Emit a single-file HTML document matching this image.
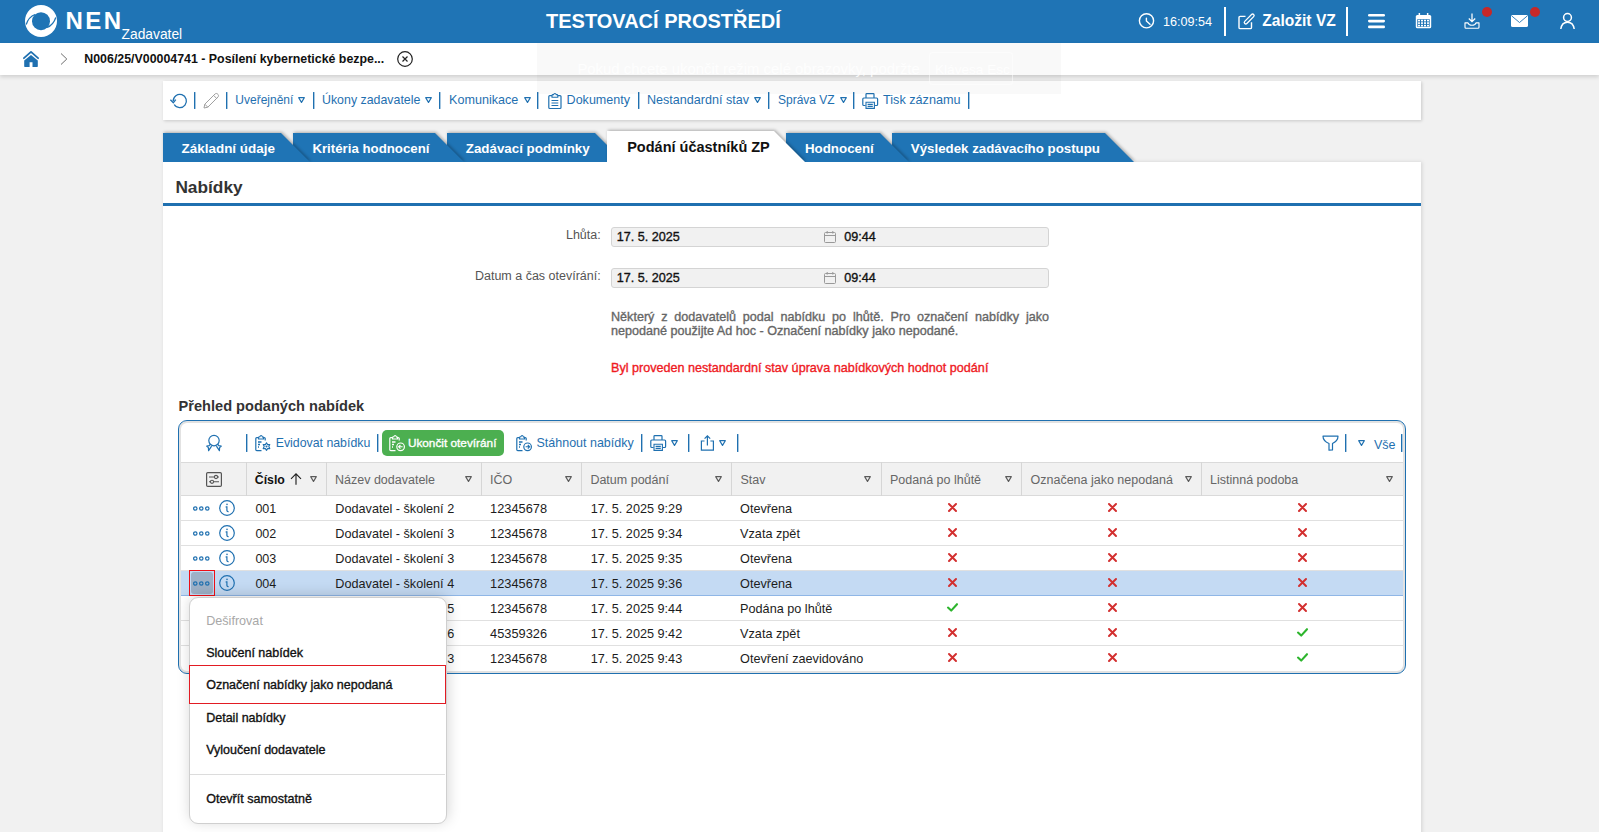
<!DOCTYPE html><html><head><meta charset="utf-8"><style>
html,body{margin:0;padding:0;}
body{width:1599px;height:832px;overflow:hidden;position:relative;background:#f1f1f1;font-family:"Liberation Sans", sans-serif;}
.t{position:absolute;white-space:nowrap;font-family:"Liberation Sans", sans-serif;}
.med{-webkit-text-stroke:0.35px currentColor;}
svg{overflow:visible}

</style></head><body>
<div style="position:absolute;left:163px;top:162px;width:1258px;height:700px;background:#fff;box-shadow:1px 0 4px rgba(0,0,0,0.13);"></div>
<div style="position:absolute;left:163px;top:81px;width:1258px;height:39px;background:#fff;box-shadow:1px 1px 3px rgba(0,0,0,0.17);"></div>
<div style="position:absolute;left:0px;top:0px;width:1599px;height:43px;background:#1f74b5;"></div>
<svg style="position:absolute;left:25px;top:5px;" width="32" height="32" viewBox="0 0 32 32"><circle cx="16" cy="16" r="16" fill="#fff"/>
<circle cx="16" cy="16.2" r="9" fill="#1f74b5"/>
<path d="M1.2 19.5 C3 14 6 11 10 9.5" stroke="#1f74b5" stroke-width="1.25" fill="none"/>
<path d="M30.8 12.5 C29 18 26 21 22 22.5" stroke="#1f74b5" stroke-width="1.25" fill="none"/></svg>
<div class="t " style="left:65.5px;top:9.08px;font-size:24px;line-height:24px;font-weight:bold;color:#fff;letter-spacing:2.4px;">NEN</div>
<div class="t " style="left:121.6px;top:27.72px;font-size:13.8px;line-height:13.8px;font-weight:normal;color:#fff;">Zadavatel</div>
<div class="t " style="left:546px;top:10.97px;font-size:20px;line-height:20px;font-weight:bold;color:#fff;">TESTOVACÍ PROSTŘEDÍ</div>
<svg style="position:absolute;left:1138px;top:13px;" width="17" height="16" viewBox="0 0 17 16"><circle cx="8.5" cy="7.8" r="7.1" stroke="#fff" stroke-width="1.4" fill="none"/><path d="M8.4 5.2 V8.1 L12 11.3" stroke="#fff" stroke-width="1.4" fill="none" stroke-linecap="round" stroke-linejoin="round"/></svg>
<div class="t " style="left:1163px;top:16.03px;font-size:12.6px;line-height:12.6px;font-weight:normal;color:#fff;">16:09:54</div>
<div style="position:absolute;left:1224px;top:7px;width:2px;height:29px;background:#fff;"></div>
<svg style="position:absolute;left:1238px;top:13px;" width="17" height="16" viewBox="0 0 17 16"><path d="M7.5 3.4 H2.2 Q1 3.4 1 4.6 V14.4 Q1 15.6 2.2 15.6 H12.3 Q13.5 15.6 13.5 14.4 V9.3" stroke="#fff" stroke-width="1.4" fill="none"/><path d="M7.8 9.4 L14.6 2.6" stroke="#fff" stroke-width="4.3" stroke-linecap="round"/><path d="M7.8 9.4 L14.6 2.6" stroke="#1f74b5" stroke-width="1.7" stroke-linecap="round"/></svg>
<div class="t " style="left:1262.2px;top:12.79px;font-size:15.6px;line-height:15.6px;font-weight:bold;color:#fff;">Založit VZ</div>
<div style="position:absolute;left:1346px;top:7px;width:2px;height:29px;background:#fff;"></div>
<svg style="position:absolute;left:1368px;top:13px;" width="17" height="16" viewBox="0 0 17 16"><rect x="0" y="1" width="17" height="2.6" rx="1.3" fill="#fff"/><rect x="0" y="6.8" width="17" height="2.6" rx="1.3" fill="#fff"/><rect x="0" y="12.6" width="17" height="2.6" rx="1.3" fill="#fff"/></svg>
<svg style="position:absolute;left:1415px;top:13px;" width="17" height="16" viewBox="0 0 17 16"><rect x="0.8" y="2" width="15.4" height="13.2" rx="1.5" fill="#fff"/>
<rect x="2.3" y="6.2" width="12.4" height="7.6" fill="#1f74b5"/>
<g fill="#fff"><rect x="3" y="6.8" width="2" height="1.6"/><rect x="6" y="6.8" width="2" height="1.6"/><rect x="9" y="6.8" width="2" height="1.6"/><rect x="12" y="6.8" width="2" height="1.6"/>
<rect x="3" y="9.3" width="2" height="1.6"/><rect x="6" y="9.3" width="2" height="1.6"/><rect x="9" y="9.3" width="2" height="1.6"/><rect x="12" y="9.3" width="2" height="1.6"/>
<rect x="3" y="11.8" width="2" height="1.6"/><rect x="6" y="11.8" width="2" height="1.6"/><rect x="9" y="11.8" width="2" height="1.6"/><rect x="12" y="11.8" width="2" height="1.6"/></g>
<rect x="3.6" y="0" width="1.5" height="3.5" fill="#fff"/><rect x="11.9" y="0" width="1.5" height="3.5" fill="#fff"/></svg>
<svg style="position:absolute;left:1464px;top:13px;" width="16" height="16" viewBox="0 0 16 16"><path d="M8 0.5 V8.5 M4.8 5.5 L8 8.7 L11.2 5.5" stroke="#fff" stroke-width="1.25" fill="none"/><path d="M1 9.8 V14.2 Q1 15.2 2 15.2 H14 Q15 15.2 15 14.2 V9.8 H12 C11.5 11.6 10 12.2 8 12.2 C6 12.2 4.5 11.6 4 9.8 Z" stroke="#fff" stroke-width="1.15" fill="none" stroke-linejoin="round"/></svg>
<svg style="position:absolute;left:1482px;top:7px;" width="10" height="10" viewBox="0 0 10 10"><circle cx="5" cy="5" r="5" fill="#c62828"/></svg>
<svg style="position:absolute;left:1511px;top:15px;" width="17" height="12" viewBox="0 0 17 12"><rect x="0" y="0" width="17" height="12" rx="1.6" fill="#fff"/><path d="M0.8 1 L8.5 7.5 L16.2 1" stroke="#1f74b5" stroke-width="0.9" fill="none"/></svg>
<svg style="position:absolute;left:1530px;top:7px;" width="10" height="10" viewBox="0 0 10 10"><circle cx="5" cy="5" r="5" fill="#c62828"/></svg>
<svg style="position:absolute;left:1560px;top:13px;" width="16" height="16" viewBox="0 0 16 16"><circle cx="7.5" cy="4.5" r="3.9" stroke="#fff" stroke-width="1.5" fill="none"/><path d="M0.8 16 C1.5 11 4 9.2 7.5 9.2 C11 9.2 13.5 11 14.2 16" stroke="#fff" stroke-width="1.5" fill="none"/></svg>
<div style="position:absolute;left:0px;top:43px;width:1599px;height:32px;background:#fff;box-shadow:0 2px 4px rgba(0,0,0,0.14);"></div>
<svg style="position:absolute;left:23px;top:51px;" width="16" height="16" viewBox="0 0 16 16"><path d="M0.9 7.2 L8 0.9 L15.1 7.2" stroke="#1f70b0" stroke-width="1.8" fill="none" stroke-linecap="round" stroke-linejoin="round"/><path d="M1.2 9.4 L8 3.9 L14.8 9.4 V15.3 Q14.8 15.9 14.2 15.9 H9.5 V11.3 H6.6 V15.9 H1.8 Q1.2 15.9 1.2 15.3 Z" fill="#1f70b0"/></svg>
<svg style="position:absolute;left:60px;top:53px;" width="8" height="12" viewBox="0 0 8 12"><path d="M1 0.5 L6.8 6 L1 11.5" stroke="#666" stroke-width="0.95" fill="none"/></svg>
<div class="t " style="left:84.3px;top:53.22px;font-size:12.38px;line-height:12.38px;font-weight:bold;color:#111;">N006/25/V00004741 - Posílení kybernetické bezpe...</div>
<svg style="position:absolute;left:397px;top:51px;" width="16" height="16" viewBox="0 0 16 16"><circle cx="8" cy="8" r="7.3" stroke="#222" stroke-width="1.2" fill="none"/><path d="M5.5 5.5 L10.5 10.5 M10.5 5.5 L5.5 10.5" stroke="#222" stroke-width="1.2"/></svg>
<svg style="position:absolute;left:171.2px;top:95.2px;" width="16" height="15" viewBox="0 0 16 15"><path d="M3.2 9.5 A6.6 6.6 0 1 0 2.2 6.2" stroke="#1f70b0" stroke-width="1.3" fill="none"/><path d="M-0.6 4.8 L2.3 7.8 L4.8 4.6" stroke="#1f70b0" stroke-width="1.3" fill="none"/></svg>
<svg style="position:absolute;left:193.8px;top:92px;" width="1.4" height="17" viewBox="0 0 1.4 17"><rect x="0" y="0" width="1.4" height="17" fill="#1f70b0"/></svg>
<svg style="position:absolute;left:203px;top:93px;" width="16" height="16" viewBox="0 0 16 16"><path d="M1 15 L1.8 11.2 L12 1 C12.8 0.3 13.8 0.3 14.6 1 L15 1.4 C15.7 2.2 15.7 3.2 15 4 L4.8 14.2 Z M10.6 2.4 L13.6 5.4 M1.8 11.2 L4.8 14.2" stroke="#a0a0a0" stroke-width="1" fill="none" stroke-linejoin="round"/></svg>
<svg style="position:absolute;left:225.8px;top:92px;" width="1.4" height="17" viewBox="0 0 1.4 17"><rect x="0" y="0" width="1.4" height="17" fill="#1f70b0"/></svg>
<div class="t " style="left:235.3px;top:94.24px;font-size:12.0px;line-height:12.0px;font-weight:normal;color:#1f70b0;">Uveřejnění</div>
<svg style="position:absolute;left:298.3px;top:97px;" width="7" height="6" viewBox="0 0 7 6"><path d="M0.7 0.7 H6.3 L3.5 5.4 Z" stroke="#1f70b0" stroke-width="1.2" fill="none" stroke-linejoin="round"/></svg>
<svg style="position:absolute;left:312.90000000000003px;top:92px;" width="1.4" height="17" viewBox="0 0 1.4 17"><rect x="0" y="0" width="1.4" height="17" fill="#1f70b0"/></svg>
<div class="t " style="left:322px;top:93.92px;font-size:12.38px;line-height:12.38px;font-weight:normal;color:#1f70b0;">Úkony zadavatele</div>
<svg style="position:absolute;left:425.3px;top:97px;" width="7" height="6" viewBox="0 0 7 6"><path d="M0.7 0.7 H6.3 L3.5 5.4 Z" stroke="#1f70b0" stroke-width="1.2" fill="none" stroke-linejoin="round"/></svg>
<svg style="position:absolute;left:438.8px;top:92px;" width="1.4" height="17" viewBox="0 0 1.4 17"><rect x="0" y="0" width="1.4" height="17" fill="#1f70b0"/></svg>
<div class="t " style="left:449px;top:93.73px;font-size:12.6px;line-height:12.6px;font-weight:normal;color:#1f70b0;">Komunikace</div>
<svg style="position:absolute;left:523.7px;top:97px;" width="7" height="6" viewBox="0 0 7 6"><path d="M0.7 0.7 H6.3 L3.5 5.4 Z" stroke="#1f70b0" stroke-width="1.2" fill="none" stroke-linejoin="round"/></svg>
<svg style="position:absolute;left:536.5999999999999px;top:92px;" width="1.4" height="17" viewBox="0 0 1.4 17"><rect x="0" y="0" width="1.4" height="17" fill="#1f70b0"/></svg>
<svg style="position:absolute;left:548px;top:93px;" width="14" height="16" viewBox="0 0 14 16"><path d="M4 2.6 H1.8 C1.2 2.6 0.8 3 0.8 3.6 V14.6 C0.8 15.2 1.2 15.5 1.8 15.5 H12 C12.6 15.5 13 15.2 13 14.6 V3.6 C13 3 12.6 2.6 12 2.6 H10" stroke="#1f70b0" stroke-width="1.2" fill="none"/><path d="M4 4.2 V2.4 C4 1.8 4.4 1.6 5 1.6 H5.6 C5.8 0.8 6.2 0.5 6.9 0.5 C7.6 0.5 8 0.8 8.2 1.6 H8.8 C9.4 1.6 9.8 1.8 9.8 2.4 V4.2 Z" stroke="#1f70b0" stroke-width="1.1" fill="none"/><path d="M3.5 7.5 H10.3 M3.5 10 H10.3 M3.5 12.5 H10.3" stroke="#1f70b0" stroke-width="1.1"/></svg>
<div class="t " style="left:566.6px;top:93.78px;font-size:12.54px;line-height:12.54px;font-weight:normal;color:#1f70b0;">Dokumenty</div>
<svg style="position:absolute;left:637.6999999999999px;top:92px;" width="1.4" height="17" viewBox="0 0 1.4 17"><rect x="0" y="0" width="1.4" height="17" fill="#1f70b0"/></svg>
<div class="t " style="left:647px;top:93.76px;font-size:12.57px;line-height:12.57px;font-weight:normal;color:#1f70b0;">Nestandardní stav</div>
<svg style="position:absolute;left:754.3px;top:97px;" width="7" height="6" viewBox="0 0 7 6"><path d="M0.7 0.7 H6.3 L3.5 5.4 Z" stroke="#1f70b0" stroke-width="1.2" fill="none" stroke-linejoin="round"/></svg>
<svg style="position:absolute;left:767.5999999999999px;top:92px;" width="1.4" height="17" viewBox="0 0 1.4 17"><rect x="0" y="0" width="1.4" height="17" fill="#1f70b0"/></svg>
<div class="t " style="left:778px;top:94.24px;font-size:12.0px;line-height:12.0px;font-weight:normal;color:#1f70b0;">Správa VZ</div>
<svg style="position:absolute;left:839.6px;top:97px;" width="7" height="6" viewBox="0 0 7 6"><path d="M0.7 0.7 H6.3 L3.5 5.4 Z" stroke="#1f70b0" stroke-width="1.2" fill="none" stroke-linejoin="round"/></svg>
<svg style="position:absolute;left:852.9px;top:92px;" width="1.4" height="17" viewBox="0 0 1.4 17"><rect x="0" y="0" width="1.4" height="17" fill="#1f70b0"/></svg>
<svg style="position:absolute;left:862px;top:93px;" width="17" height="16" viewBox="0 0 17 16"><path d="M4 5 V1.2 C4 0.8 4.3 0.6 4.7 0.6 H11.3 C11.7 0.6 12 0.8 12 1.2 V5" stroke="#1f70b0" stroke-width="1.2" fill="none"/><path d="M3.6 12.5 H1.8 C1.2 12.5 0.8 12.1 0.8 11.5 V6 C0.8 5.4 1.2 5 1.8 5 H14.6 C15.2 5 15.6 5.4 15.6 6 V11.5 C15.6 12.1 15.2 12.5 14.6 12.5 H12.8" stroke="#1f70b0" stroke-width="1.2" fill="none"/><path d="M4 9.2 H12.4 V15.4 H4 Z M5.6 11.4 H10.8 M5.6 13.4 H10.8" stroke="#1f70b0" stroke-width="1.1" fill="none"/></svg>
<div class="t " style="left:883px;top:93.68px;font-size:12.66px;line-height:12.66px;font-weight:normal;color:#1f70b0;">Tisk záznamu</div>
<svg style="position:absolute;left:967.5999999999999px;top:92px;" width="1.4" height="17" viewBox="0 0 1.4 17"><rect x="0" y="0" width="1.4" height="17" fill="#1f70b0"/></svg>
<div style="position:absolute;left:892px;top:133px;width:246px;height:29px;filter:drop-shadow(1.5px -0.5px 1.5px rgba(0,0,0,0.28));"><div style="position:absolute;left:0;top:0;width:246px;height:29px;background:#1f74b5;clip-path:polygon(0 0,213px 0,242px 29px,0 29px);"></div></div>
<div class="t " style="left:910.8px;top:142.04px;font-size:13.3px;line-height:13.3px;font-weight:bold;color:#fff;">Výsledek zadávacího postupu</div>
<div style="position:absolute;left:786px;top:133px;width:127px;height:29px;filter:drop-shadow(1.5px -0.5px 1.5px rgba(0,0,0,0.28));"><div style="position:absolute;left:0;top:0;width:127px;height:29px;background:#1f74b5;clip-path:polygon(0 0,94px 0,123px 29px,0 29px);"></div></div>
<div class="t " style="left:804.9px;top:142.00px;font-size:13.35px;line-height:13.35px;font-weight:bold;color:#fff;">Hodnocení</div>
<div style="position:absolute;left:447px;top:133px;width:181px;height:29px;filter:drop-shadow(1.5px -0.5px 1.5px rgba(0,0,0,0.28));"><div style="position:absolute;left:0;top:0;width:181px;height:29px;background:#1f74b5;clip-path:polygon(0 0,148px 0,177px 29px,0 29px);"></div></div>
<div class="t " style="left:465.8px;top:142.00px;font-size:13.35px;line-height:13.35px;font-weight:bold;color:#fff;">Zadávací podmínky</div>
<div style="position:absolute;left:293px;top:133px;width:175px;height:29px;filter:drop-shadow(1.5px -0.5px 1.5px rgba(0,0,0,0.28));"><div style="position:absolute;left:0;top:0;width:175px;height:29px;background:#1f74b5;clip-path:polygon(0 0,142px 0,171px 29px,0 29px);"></div></div>
<div class="t " style="left:312.4px;top:142.08px;font-size:13.25px;line-height:13.25px;font-weight:bold;color:#fff;">Kritéria hodnocení</div>
<div style="position:absolute;left:163px;top:133px;width:151px;height:29px;filter:drop-shadow(1.5px -0.5px 1.5px rgba(0,0,0,0.28));"><div style="position:absolute;left:0;top:0;width:151px;height:29px;background:#1f74b5;clip-path:polygon(0 0,118px 0,147px 29px,0 29px);"></div></div>
<div class="t " style="left:181.6px;top:141.91px;font-size:13.45px;line-height:13.45px;font-weight:bold;color:#fff;">Základní údaje</div>
<div style="position:absolute;left:607px;top:131px;width:202px;height:31px;filter:drop-shadow(1.5px -0.5px 1.5px rgba(0,0,0,0.28));"><div style="position:absolute;left:0;top:0;width:202px;height:31px;background:#fff;clip-path:polygon(0 0,167px 0,198px 31px,0 31px);"></div></div>
<div class="t " style="left:627.2px;top:139.53px;font-size:14.5px;line-height:14.5px;font-weight:bold;color:#111;">Podání účastníků ZP</div>
<div style="position:absolute;left:163px;top:162px;width:1258px;height:2px;background:#fff;"></div>
<div class="t " style="left:175.4px;top:178.86px;font-size:17.3px;line-height:17.3px;font-weight:bold;color:#333;">Nabídky</div>
<div style="position:absolute;left:163px;top:203px;width:1258px;height:3px;background:#1f70b0;"></div>
<div class="t " style="right:998.3px;top:229.42px;font-size:12.5px;line-height:12.5px;font-weight:normal;color:#555;">Lhůta:</div>
<div class="t " style="right:998.3px;top:269.82px;font-size:12.5px;line-height:12.5px;font-weight:normal;color:#555;">Datum a čas otevírání:</div>
<div style="position:absolute;left:611px;top:226.5px;width:438px;height:20px;background:#f1f1f1;border:1px solid #d4d4d4;border-radius:3px;box-sizing:border-box;"></div>
<div class="t med" style="left:616.8px;top:230.93px;font-size:12.6px;line-height:12.6px;font-weight:normal;color:#111;">17. 5. 2025</div>
<svg style="position:absolute;left:824px;top:230.5px;" width="12" height="12" viewBox="0 0 12 12"><rect x="0.5" y="1.5" width="11" height="10" rx="1" stroke="#999" stroke-width="1" fill="none"/><path d="M0.5 4.5 H11.5 M3.2 0 V2.6 M8.8 0 V2.6" stroke="#999" stroke-width="1"/></svg>
<div class="t med" style="left:844.2px;top:230.93px;font-size:12.6px;line-height:12.6px;font-weight:normal;color:#111;">09:44</div>
<div style="position:absolute;left:611px;top:267.8px;width:438px;height:20px;background:#f1f1f1;border:1px solid #d4d4d4;border-radius:3px;box-sizing:border-box;"></div>
<div class="t med" style="left:616.8px;top:272.23px;font-size:12.6px;line-height:12.6px;font-weight:normal;color:#111;">17. 5. 2025</div>
<svg style="position:absolute;left:824px;top:271.8px;" width="12" height="12" viewBox="0 0 12 12"><rect x="0.5" y="1.5" width="11" height="10" rx="1" stroke="#999" stroke-width="1" fill="none"/><path d="M0.5 4.5 H11.5 M3.2 0 V2.6 M8.8 0 V2.6" stroke="#999" stroke-width="1"/></svg>
<div class="t med" style="left:844.2px;top:272.23px;font-size:12.6px;line-height:12.6px;font-weight:normal;color:#111;">09:44</div>
<div class="t med" style="left:611px;top:309.63px;width:438px;white-space:normal;text-align:justify;font-size:12.6px;line-height:14.3px;color:#666;">Některý z dodavatelů podal nabídku po lhůtě. Pro označení nabídky jako nepodané použijte Ad hoc - Označení nabídky jako nepodané.</div>
<div class="t med" style="left:611px;top:362.13px;font-size:12.6px;line-height:12.6px;font-weight:normal;color:#ef1a1f;">Byl proveden nestandardní stav úprava nabídkových hodnot podání</div>
<div class="t " style="left:178.6px;top:399.35px;font-size:14.59px;line-height:14.59px;font-weight:bold;color:#333;">Přehled podaných nabídek</div>
<div style="position:absolute;left:178px;top:420px;width:1228px;height:254px;border:1.5px solid #1f70b0;border-radius:9px;box-sizing:border-box;box-shadow:inset 0 0 0 2px #e2e2e2;background:#fff;"></div>
<svg style="position:absolute;left:206px;top:435px;" width="16" height="16" viewBox="0 0 16 16"><circle cx="8" cy="5.6" r="5.2" stroke="#1f70b0" stroke-width="1.2" fill="none"/><path d="M4.2 9.4 L3.2 10.6 L0.8 11.2 L2.4 12.6 L2.6 15.6 L5.6 11.2 M11.8 9.4 L12.8 10.6 L15.2 11.2 L13.6 12.6 L13.4 15.6 L10.4 11.2" stroke="#1f70b0" stroke-width="1.2" fill="none" stroke-linejoin="round"/></svg>
<svg style="position:absolute;left:245.60000000000002px;top:434px;" width="1.4" height="18" viewBox="0 0 1.4 18"><rect x="0" y="0" width="1.4" height="18" fill="#1f70b0"/></svg>
<svg style="position:absolute;left:255px;top:435px;" width="16" height="16" viewBox="0 0 16 16"><path d="M3.6 2.6 H1.8 C1.2 2.6 0.8 3 0.8 3.6 V14.8 C0.8 15.3 1.2 15.6 1.8 15.6 H6.5 M10.2 5.6 V3.6 C10.2 3 9.8 2.6 9.2 2.6 H7.6" stroke="#1f70b0" stroke-width="1.2" fill="none"/><path d="M3.6 4 V2.4 C3.6 1.9 4 1.7 4.5 1.7 H4.9 C5.1 0.9 5.5 0.5 6.1 0.5 C6.7 0.5 7.1 0.9 7.3 1.7 H7.6 C8.1 1.7 8.5 1.9 8.5 2.4 V4 Z" stroke="#1f70b0" stroke-width="1.1" fill="none"/><path d="M3 7 H6.5 M3 9.5 H5 M3 12 H4" stroke="#1f70b0" stroke-width="1.3"/><path d="M11.5 7.8 L12.6 9.6 L14.8 9.6 L13.8 11.6 L14.8 13.6 L12.6 13.6 L11.5 15.4 L10.4 13.6 L8.2 13.6 L9.2 11.6 L8.2 9.6 L10.4 9.6 Z" stroke="#1f70b0" stroke-width="1.1" fill="none" stroke-linejoin="round"/><circle cx="11.5" cy="11.6" r="1" fill="#1f70b0"/></svg>
<div class="t " style="left:275.7px;top:437.16px;font-size:12.33px;line-height:12.33px;font-weight:normal;color:#1f70b0;">Evidovat nabídku</div>
<svg style="position:absolute;left:376.8px;top:434px;" width="1.4" height="18" viewBox="0 0 1.4 18"><rect x="0" y="0" width="1.4" height="18" fill="#1f70b0"/></svg>
<div style="position:absolute;left:382px;top:430px;width:122px;height:26px;background:#4caf50;border-radius:5px;"></div>
<svg style="position:absolute;left:388.5px;top:435px;" width="16" height="16" viewBox="0 0 16 16"><path d="M3.6 2.6 H1.8 C1.2 2.6 0.8 3 0.8 3.6 V14.8 C0.8 15.3 1.2 15.6 1.8 15.6 H6.5 M10.2 5.6 V3.6 C10.2 3 9.8 2.6 9.2 2.6 H7.6" stroke="#fff" stroke-width="1.2" fill="none"/><path d="M3.6 4 V2.4 C3.6 1.9 4 1.7 4.5 1.7 H4.9 C5.1 0.9 5.5 0.5 6.1 0.5 C6.7 0.5 7.1 0.9 7.3 1.7 H7.6 C8.1 1.7 8.5 1.9 8.5 2.4 V4 Z" stroke="#fff" stroke-width="1.1" fill="none"/><path d="M3 7 H6.5 M3 9.5 H5 M3 12 H4" stroke="#fff" stroke-width="1.3"/><circle cx="11.6" cy="11.8" r="3.8" stroke="#fff" stroke-width="1.2" fill="none"/><path d="M9.8 11.8 H13.6 M11.4 10 L9.6 11.8 L11.4 13.6" stroke="#fff" stroke-width="1.1" fill="none"/></svg>
<div class="t med" style="left:407.9px;top:437.61px;font-size:11.8px;line-height:11.8px;font-weight:normal;color:#fff;">Ukončit otevírání</div>
<svg style="position:absolute;left:516px;top:435px;" width="16" height="16" viewBox="0 0 16 16"><path d="M3.6 2.6 H1.8 C1.2 2.6 0.8 3 0.8 3.6 V14.8 C0.8 15.3 1.2 15.6 1.8 15.6 H6.5 M10.2 5.6 V3.6 C10.2 3 9.8 2.6 9.2 2.6 H7.6" stroke="#1f70b0" stroke-width="1.2" fill="none"/><path d="M3.6 4 V2.4 C3.6 1.9 4 1.7 4.5 1.7 H4.9 C5.1 0.9 5.5 0.5 6.1 0.5 C6.7 0.5 7.1 0.9 7.3 1.7 H7.6 C8.1 1.7 8.5 1.9 8.5 2.4 V4 Z" stroke="#1f70b0" stroke-width="1.1" fill="none"/><path d="M3 7 H6.5 M3 9.5 H5 M3 12 H4" stroke="#1f70b0" stroke-width="1.3"/><circle cx="11.6" cy="11.8" r="3.8" stroke="#1f70b0" stroke-width="1.2" fill="none"/><path d="M9.6 11.8 H13.4 M11.8 10 L13.6 11.8 L11.8 13.6" stroke="#1f70b0" stroke-width="1.1" fill="none"/></svg>
<div class="t " style="left:536.5px;top:437.03px;font-size:12.49px;line-height:12.49px;font-weight:normal;color:#1f70b0;">Stáhnout nabídky</div>
<svg style="position:absolute;left:640.9px;top:434px;" width="1.4" height="18" viewBox="0 0 1.4 18"><rect x="0" y="0" width="1.4" height="18" fill="#1f70b0"/></svg>
<svg style="position:absolute;left:650px;top:435px;" width="17" height="16" viewBox="0 0 17 16"><path d="M4 5 V1.2 C4 0.8 4.3 0.6 4.7 0.6 H11.3 C11.7 0.6 12 0.8 12 1.2 V5" stroke="#1f70b0" stroke-width="1.2" fill="none"/><path d="M3.6 12.5 H1.8 C1.2 12.5 0.8 12.1 0.8 11.5 V6 C0.8 5.4 1.2 5 1.8 5 H14.6 C15.2 5 15.6 5.4 15.6 6 V11.5 C15.6 12.1 15.2 12.5 14.6 12.5 H12.8" stroke="#1f70b0" stroke-width="1.2" fill="none"/><path d="M4 9.2 H12.4 V15.4 H4 Z M5.6 11.4 H10.8 M5.6 13.4 H10.8" stroke="#1f70b0" stroke-width="1.1" fill="none"/></svg>
<svg style="position:absolute;left:671.2px;top:440px;" width="7" height="6" viewBox="0 0 7 6"><path d="M0.7 0.7 H6.3 L3.5 5.4 Z" stroke="#1f70b0" stroke-width="1.2" fill="none" stroke-linejoin="round"/></svg>
<svg style="position:absolute;left:688.3px;top:434px;" width="1.4" height="18" viewBox="0 0 1.4 18"><rect x="0" y="0" width="1.4" height="18" fill="#1f70b0"/></svg>
<svg style="position:absolute;left:699.5px;top:435px;" width="15" height="16" viewBox="0 0 15 16"><path d="M4.5 6 H1.4 V15.2 H13.4 V6 H10.4" stroke="#1f70b0" stroke-width="1.2" fill="none"/><path d="M7.4 10.5 V0.8 M4.6 3.6 L7.4 0.8 L10.2 3.6" stroke="#1f70b0" stroke-width="1.2" fill="none"/></svg>
<svg style="position:absolute;left:718.8px;top:440px;" width="7" height="6" viewBox="0 0 7 6"><path d="M0.7 0.7 H6.3 L3.5 5.4 Z" stroke="#1f70b0" stroke-width="1.2" fill="none" stroke-linejoin="round"/></svg>
<svg style="position:absolute;left:736.9px;top:434px;" width="1.4" height="18" viewBox="0 0 1.4 18"><rect x="0" y="0" width="1.4" height="18" fill="#1f70b0"/></svg>
<svg style="position:absolute;left:1321.5px;top:435px;" width="17" height="16" viewBox="0 0 17 16"><path d="M1 1.2 H16 C16 4.5 13.5 7 10.5 8.5 V15 L7 15.2 V8.5 C3.5 7 1 4.5 1 1.2 Z" stroke="#1f70b0" stroke-width="1.2" fill="none" stroke-linejoin="round"/></svg>
<svg style="position:absolute;left:1344.8px;top:434px;" width="1.4" height="18" viewBox="0 0 1.4 18"><rect x="0" y="0" width="1.4" height="18" fill="#1f70b0"/></svg>
<svg style="position:absolute;left:1358px;top:440px;" width="7" height="6" viewBox="0 0 7 6"><path d="M0.7 0.7 H6.3 L3.5 5.4 Z" stroke="#1f70b0" stroke-width="1.2" fill="none" stroke-linejoin="round"/></svg>
<div class="t " style="left:1374px;top:438.92px;font-size:12.5px;line-height:12.5px;font-weight:normal;color:#1f70b0;">Vše</div>
<svg style="position:absolute;left:1401.3px;top:434px;" width="1.4" height="18" viewBox="0 0 1.4 18"><rect x="0" y="0" width="1.4" height="18" fill="#1f70b0"/></svg>
<div style="position:absolute;left:181px;top:462px;width:1222px;height:34px;background:#f1f1f1;border-top:1px solid #dadada;border-bottom:1px solid #dadada;box-sizing:border-box;"></div>
<div style="position:absolute;left:246.0px;top:462px;width:1px;height:34px;background:#d6d6d6;"></div>
<div style="position:absolute;left:325.8px;top:462px;width:1px;height:34px;background:#d6d6d6;"></div>
<div style="position:absolute;left:480.8px;top:462px;width:1px;height:34px;background:#d6d6d6;"></div>
<div style="position:absolute;left:580.9px;top:462px;width:1px;height:34px;background:#d6d6d6;"></div>
<div style="position:absolute;left:730.9px;top:462px;width:1px;height:34px;background:#d6d6d6;"></div>
<div style="position:absolute;left:881.0px;top:462px;width:1px;height:34px;background:#d6d6d6;"></div>
<div style="position:absolute;left:1021.1px;top:462px;width:1px;height:34px;background:#d6d6d6;"></div>
<div style="position:absolute;left:1201.0px;top:462px;width:1px;height:34px;background:#d6d6d6;"></div>
<svg style="position:absolute;left:206px;top:472px;" width="16" height="15" viewBox="0 0 16 15"><rect x="0.6" y="0.6" width="14.8" height="13.8" rx="1.2" stroke="#555" stroke-width="1.2" fill="none"/><path d="M3 5 H13 M3 9.8 H13" stroke="#555" stroke-width="1.1"/><circle cx="10" cy="5" r="1.6" fill="#f1f1f1" stroke="#555" stroke-width="1.1"/><circle cx="6" cy="9.8" r="1.6" fill="#f1f1f1" stroke="#555" stroke-width="1.1"/></svg>
<div class="t " style="left:254.8px;top:473.79px;font-size:12.3px;line-height:12.3px;font-weight:bold;color:#111;">Číslo</div>
<svg style="position:absolute;left:290px;top:473px;" width="12" height="12" viewBox="0 0 12 12"><path d="M6 11.8 V1 M1 5.8 L6 0.9 L11 5.8" stroke="#222" stroke-width="1.15" fill="none"/></svg>
<svg style="position:absolute;left:310px;top:476px;" width="7" height="6" viewBox="0 0 7 6"><path d="M0.7 0.7 H6.3 L3.5 5.4 Z" stroke="#5a5a5a" stroke-width="1.2" fill="none" stroke-linejoin="round"/></svg>
<div class="t " style="left:335px;top:474.22px;font-size:12.5px;line-height:12.5px;font-weight:normal;color:#666;">Název dodavatele</div>
<svg style="position:absolute;left:465px;top:476px;" width="7" height="6" viewBox="0 0 7 6"><path d="M0.7 0.7 H6.3 L3.5 5.4 Z" stroke="#5a5a5a" stroke-width="1.2" fill="none" stroke-linejoin="round"/></svg>
<div class="t " style="left:490px;top:474.22px;font-size:12.5px;line-height:12.5px;font-weight:normal;color:#666;">IČO</div>
<svg style="position:absolute;left:564.8px;top:476px;" width="7" height="6" viewBox="0 0 7 6"><path d="M0.7 0.7 H6.3 L3.5 5.4 Z" stroke="#5a5a5a" stroke-width="1.2" fill="none" stroke-linejoin="round"/></svg>
<div class="t " style="left:590.4px;top:474.22px;font-size:12.5px;line-height:12.5px;font-weight:normal;color:#666;">Datum podání</div>
<svg style="position:absolute;left:714.7px;top:476px;" width="7" height="6" viewBox="0 0 7 6"><path d="M0.7 0.7 H6.3 L3.5 5.4 Z" stroke="#5a5a5a" stroke-width="1.2" fill="none" stroke-linejoin="round"/></svg>
<div class="t " style="left:740.4px;top:474.22px;font-size:12.5px;line-height:12.5px;font-weight:normal;color:#666;">Stav</div>
<svg style="position:absolute;left:864px;top:476px;" width="7" height="6" viewBox="0 0 7 6"><path d="M0.7 0.7 H6.3 L3.5 5.4 Z" stroke="#5a5a5a" stroke-width="1.2" fill="none" stroke-linejoin="round"/></svg>
<div class="t " style="left:890px;top:474.22px;font-size:12.5px;line-height:12.5px;font-weight:normal;color:#666;">Podaná po lhůtě</div>
<svg style="position:absolute;left:1004.6px;top:476px;" width="7" height="6" viewBox="0 0 7 6"><path d="M0.7 0.7 H6.3 L3.5 5.4 Z" stroke="#5a5a5a" stroke-width="1.2" fill="none" stroke-linejoin="round"/></svg>
<div class="t " style="left:1030.5px;top:474.22px;font-size:12.5px;line-height:12.5px;font-weight:normal;color:#666;">Označena jako nepodaná</div>
<svg style="position:absolute;left:1184.5px;top:476px;" width="7" height="6" viewBox="0 0 7 6"><path d="M0.7 0.7 H6.3 L3.5 5.4 Z" stroke="#5a5a5a" stroke-width="1.2" fill="none" stroke-linejoin="round"/></svg>
<div class="t " style="left:1210px;top:474.22px;font-size:12.5px;line-height:12.5px;font-weight:normal;color:#666;">Listinná podoba</div>
<svg style="position:absolute;left:1385.6px;top:476px;" width="7" height="6" viewBox="0 0 7 6"><path d="M0.7 0.7 H6.3 L3.5 5.4 Z" stroke="#5a5a5a" stroke-width="1.2" fill="none" stroke-linejoin="round"/></svg>
<div style="position:absolute;left:181px;top:520.0px;width:1222px;height:1px;background:#e0e0e0;"></div>
<svg style="position:absolute;left:192.5px;top:505.7px;" width="17" height="5" viewBox="0 0 17 5"><circle cx="2.3" cy="2.5" r="1.7" stroke="#1f70b0" stroke-width="1.2" fill="none"/><circle cx="8.3" cy="2.5" r="1.7" stroke="#1f70b0" stroke-width="1.2" fill="none"/><circle cx="14.3" cy="2.5" r="1.7" stroke="#1f70b0" stroke-width="1.2" fill="none"/></svg>
<svg style="position:absolute;left:219px;top:499.8px;" width="16" height="16" viewBox="0 0 16 16"><circle cx="8" cy="8" r="7.3" stroke="#1f70b0" stroke-width="1.2" fill="none"/><path d="M8 4.3 V4.5" stroke="#1f70b0" stroke-width="1.5" stroke-linecap="round"/><path d="M7.1 6.9 H7.9 V10.4 Q8 11.6 9.1 11.7" stroke="#1f70b0" stroke-width="1.2" fill="none" stroke-linecap="round"/></svg>
<div class="t " style="left:255.4px;top:503.02px;font-size:12.5px;line-height:12.5px;font-weight:normal;color:#1c1c1c;">001</div>
<div class="t " style="left:335.3px;top:502.87px;font-size:12.67px;line-height:12.67px;font-weight:normal;color:#1c1c1c;">Dodavatel - školení 2</div>
<div class="t " style="left:490.1px;top:502.76px;font-size:12.8px;line-height:12.8px;font-weight:normal;color:#1c1c1c;">12345678</div>
<div class="t " style="left:590.7px;top:502.87px;font-size:12.67px;line-height:12.67px;font-weight:normal;color:#1c1c1c;">17. 5. 2025 9:29</div>
<div class="t " style="left:740.1px;top:502.87px;font-size:12.67px;line-height:12.67px;font-weight:normal;color:#1c1c1c;">Otevřena</div>
<svg style="position:absolute;left:948.2px;top:503.3px;" width="9" height="9" viewBox="0 0 9 9"><path d="M1 1 L8 8 M8 1 L1 8" stroke="#d32f2f" stroke-width="2" stroke-linecap="round"/></svg>
<svg style="position:absolute;left:1107.9px;top:503.3px;" width="9" height="9" viewBox="0 0 9 9"><path d="M1 1 L8 8 M8 1 L1 8" stroke="#d32f2f" stroke-width="2" stroke-linecap="round"/></svg>
<svg style="position:absolute;left:1298.2px;top:503.3px;" width="9" height="9" viewBox="0 0 9 9"><path d="M1 1 L8 8 M8 1 L1 8" stroke="#d32f2f" stroke-width="2" stroke-linecap="round"/></svg>
<div style="position:absolute;left:181px;top:545.0px;width:1222px;height:1px;background:#e0e0e0;"></div>
<svg style="position:absolute;left:192.5px;top:530.6999999999999px;" width="17" height="5" viewBox="0 0 17 5"><circle cx="2.3" cy="2.5" r="1.7" stroke="#1f70b0" stroke-width="1.2" fill="none"/><circle cx="8.3" cy="2.5" r="1.7" stroke="#1f70b0" stroke-width="1.2" fill="none"/><circle cx="14.3" cy="2.5" r="1.7" stroke="#1f70b0" stroke-width="1.2" fill="none"/></svg>
<svg style="position:absolute;left:219px;top:524.8px;" width="16" height="16" viewBox="0 0 16 16"><circle cx="8" cy="8" r="7.3" stroke="#1f70b0" stroke-width="1.2" fill="none"/><path d="M8 4.3 V4.5" stroke="#1f70b0" stroke-width="1.5" stroke-linecap="round"/><path d="M7.1 6.9 H7.9 V10.4 Q8 11.6 9.1 11.7" stroke="#1f70b0" stroke-width="1.2" fill="none" stroke-linecap="round"/></svg>
<div class="t " style="left:255.4px;top:528.02px;font-size:12.5px;line-height:12.5px;font-weight:normal;color:#1c1c1c;">002</div>
<div class="t " style="left:335.3px;top:527.87px;font-size:12.67px;line-height:12.67px;font-weight:normal;color:#1c1c1c;">Dodavatel - školení 3</div>
<div class="t " style="left:490.1px;top:527.76px;font-size:12.8px;line-height:12.8px;font-weight:normal;color:#1c1c1c;">12345678</div>
<div class="t " style="left:590.7px;top:527.87px;font-size:12.67px;line-height:12.67px;font-weight:normal;color:#1c1c1c;">17. 5. 2025 9:34</div>
<div class="t " style="left:740.1px;top:527.87px;font-size:12.67px;line-height:12.67px;font-weight:normal;color:#1c1c1c;">Vzata zpět</div>
<svg style="position:absolute;left:948.2px;top:528.3px;" width="9" height="9" viewBox="0 0 9 9"><path d="M1 1 L8 8 M8 1 L1 8" stroke="#d32f2f" stroke-width="2" stroke-linecap="round"/></svg>
<svg style="position:absolute;left:1107.9px;top:528.3px;" width="9" height="9" viewBox="0 0 9 9"><path d="M1 1 L8 8 M8 1 L1 8" stroke="#d32f2f" stroke-width="2" stroke-linecap="round"/></svg>
<svg style="position:absolute;left:1298.2px;top:528.3px;" width="9" height="9" viewBox="0 0 9 9"><path d="M1 1 L8 8 M8 1 L1 8" stroke="#d32f2f" stroke-width="2" stroke-linecap="round"/></svg>
<div style="position:absolute;left:181px;top:570.0px;width:1222px;height:1px;background:#e0e0e0;"></div>
<svg style="position:absolute;left:192.5px;top:555.6999999999999px;" width="17" height="5" viewBox="0 0 17 5"><circle cx="2.3" cy="2.5" r="1.7" stroke="#1f70b0" stroke-width="1.2" fill="none"/><circle cx="8.3" cy="2.5" r="1.7" stroke="#1f70b0" stroke-width="1.2" fill="none"/><circle cx="14.3" cy="2.5" r="1.7" stroke="#1f70b0" stroke-width="1.2" fill="none"/></svg>
<svg style="position:absolute;left:219px;top:549.8px;" width="16" height="16" viewBox="0 0 16 16"><circle cx="8" cy="8" r="7.3" stroke="#1f70b0" stroke-width="1.2" fill="none"/><path d="M8 4.3 V4.5" stroke="#1f70b0" stroke-width="1.5" stroke-linecap="round"/><path d="M7.1 6.9 H7.9 V10.4 Q8 11.6 9.1 11.7" stroke="#1f70b0" stroke-width="1.2" fill="none" stroke-linecap="round"/></svg>
<div class="t " style="left:255.4px;top:553.02px;font-size:12.5px;line-height:12.5px;font-weight:normal;color:#1c1c1c;">003</div>
<div class="t " style="left:335.3px;top:552.87px;font-size:12.67px;line-height:12.67px;font-weight:normal;color:#1c1c1c;">Dodavatel - školení 3</div>
<div class="t " style="left:490.1px;top:552.76px;font-size:12.8px;line-height:12.8px;font-weight:normal;color:#1c1c1c;">12345678</div>
<div class="t " style="left:590.7px;top:552.87px;font-size:12.67px;line-height:12.67px;font-weight:normal;color:#1c1c1c;">17. 5. 2025 9:35</div>
<div class="t " style="left:740.1px;top:552.87px;font-size:12.67px;line-height:12.67px;font-weight:normal;color:#1c1c1c;">Otevřena</div>
<svg style="position:absolute;left:948.2px;top:553.3px;" width="9" height="9" viewBox="0 0 9 9"><path d="M1 1 L8 8 M8 1 L1 8" stroke="#d32f2f" stroke-width="2" stroke-linecap="round"/></svg>
<svg style="position:absolute;left:1107.9px;top:553.3px;" width="9" height="9" viewBox="0 0 9 9"><path d="M1 1 L8 8 M8 1 L1 8" stroke="#d32f2f" stroke-width="2" stroke-linecap="round"/></svg>
<svg style="position:absolute;left:1298.2px;top:553.3px;" width="9" height="9" viewBox="0 0 9 9"><path d="M1 1 L8 8 M8 1 L1 8" stroke="#d32f2f" stroke-width="2" stroke-linecap="round"/></svg>
<div style="position:absolute;left:181px;top:570.5px;width:1222px;height:25px;background:#c4daf3;border-bottom:1px solid #8fb6e6;box-sizing:border-box;"></div>
<div style="position:absolute;left:189px;top:570px;width:26px;height:26px;border:1.8px solid #ee0f16;box-sizing:border-box;"></div>
<div style="position:absolute;left:191px;top:572px;width:22px;height:22px;background:#9eb1c7;border-radius:3px;"></div>
<svg style="position:absolute;left:192.5px;top:580.6999999999999px;" width="17" height="5" viewBox="0 0 17 5"><circle cx="2.3" cy="2.5" r="1.7" stroke="#1f70b0" stroke-width="1.2" fill="none"/><circle cx="8.3" cy="2.5" r="1.7" stroke="#1f70b0" stroke-width="1.2" fill="none"/><circle cx="14.3" cy="2.5" r="1.7" stroke="#1f70b0" stroke-width="1.2" fill="none"/></svg>
<svg style="position:absolute;left:219px;top:574.8px;" width="16" height="16" viewBox="0 0 16 16"><circle cx="8" cy="8" r="7.3" stroke="#1f70b0" stroke-width="1.2" fill="none"/><path d="M8 4.3 V4.5" stroke="#1f70b0" stroke-width="1.5" stroke-linecap="round"/><path d="M7.1 6.9 H7.9 V10.4 Q8 11.6 9.1 11.7" stroke="#1f70b0" stroke-width="1.2" fill="none" stroke-linecap="round"/></svg>
<div class="t " style="left:255.4px;top:578.02px;font-size:12.5px;line-height:12.5px;font-weight:normal;color:#1c1c1c;">004</div>
<div class="t " style="left:335.3px;top:577.87px;font-size:12.67px;line-height:12.67px;font-weight:normal;color:#1c1c1c;">Dodavatel - školení 4</div>
<div class="t " style="left:490.1px;top:577.76px;font-size:12.8px;line-height:12.8px;font-weight:normal;color:#1c1c1c;">12345678</div>
<div class="t " style="left:590.7px;top:577.87px;font-size:12.67px;line-height:12.67px;font-weight:normal;color:#1c1c1c;">17. 5. 2025 9:36</div>
<div class="t " style="left:740.1px;top:577.87px;font-size:12.67px;line-height:12.67px;font-weight:normal;color:#1c1c1c;">Otevřena</div>
<svg style="position:absolute;left:948.2px;top:578.3px;" width="9" height="9" viewBox="0 0 9 9"><path d="M1 1 L8 8 M8 1 L1 8" stroke="#d32f2f" stroke-width="2" stroke-linecap="round"/></svg>
<svg style="position:absolute;left:1107.9px;top:578.3px;" width="9" height="9" viewBox="0 0 9 9"><path d="M1 1 L8 8 M8 1 L1 8" stroke="#d32f2f" stroke-width="2" stroke-linecap="round"/></svg>
<svg style="position:absolute;left:1298.2px;top:578.3px;" width="9" height="9" viewBox="0 0 9 9"><path d="M1 1 L8 8 M8 1 L1 8" stroke="#d32f2f" stroke-width="2" stroke-linecap="round"/></svg>
<div style="position:absolute;left:181px;top:620.0px;width:1222px;height:1px;background:#e0e0e0;"></div>
<svg style="position:absolute;left:192.5px;top:605.6999999999999px;" width="17" height="5" viewBox="0 0 17 5"><circle cx="2.3" cy="2.5" r="1.7" stroke="#1f70b0" stroke-width="1.2" fill="none"/><circle cx="8.3" cy="2.5" r="1.7" stroke="#1f70b0" stroke-width="1.2" fill="none"/><circle cx="14.3" cy="2.5" r="1.7" stroke="#1f70b0" stroke-width="1.2" fill="none"/></svg>
<svg style="position:absolute;left:219px;top:599.8px;" width="16" height="16" viewBox="0 0 16 16"><circle cx="8" cy="8" r="7.3" stroke="#1f70b0" stroke-width="1.2" fill="none"/><path d="M8 4.3 V4.5" stroke="#1f70b0" stroke-width="1.5" stroke-linecap="round"/><path d="M7.1 6.9 H7.9 V10.4 Q8 11.6 9.1 11.7" stroke="#1f70b0" stroke-width="1.2" fill="none" stroke-linecap="round"/></svg>
<div class="t " style="left:255.4px;top:603.02px;font-size:12.5px;line-height:12.5px;font-weight:normal;color:#1c1c1c;">005</div>
<div class="t " style="left:335.3px;top:602.87px;font-size:12.67px;line-height:12.67px;font-weight:normal;color:#1c1c1c;">Dodavatel - školení 5</div>
<div class="t " style="left:490.1px;top:602.76px;font-size:12.8px;line-height:12.8px;font-weight:normal;color:#1c1c1c;">12345678</div>
<div class="t " style="left:590.7px;top:602.87px;font-size:12.67px;line-height:12.67px;font-weight:normal;color:#1c1c1c;">17. 5. 2025 9:44</div>
<div class="t " style="left:740.1px;top:602.87px;font-size:12.67px;line-height:12.67px;font-weight:normal;color:#1c1c1c;">Podána po lhůtě</div>
<svg style="position:absolute;left:947.0px;top:603.3px;" width="11" height="9" viewBox="0 0 11 9"><path d="M1 4.6 L4.2 7.6 L10 1.2" stroke="#2db52d" stroke-width="2.1" fill="none" stroke-linecap="round" stroke-linejoin="round"/></svg>
<svg style="position:absolute;left:1107.9px;top:603.3px;" width="9" height="9" viewBox="0 0 9 9"><path d="M1 1 L8 8 M8 1 L1 8" stroke="#d32f2f" stroke-width="2" stroke-linecap="round"/></svg>
<svg style="position:absolute;left:1298.2px;top:603.3px;" width="9" height="9" viewBox="0 0 9 9"><path d="M1 1 L8 8 M8 1 L1 8" stroke="#d32f2f" stroke-width="2" stroke-linecap="round"/></svg>
<div style="position:absolute;left:181px;top:645.0px;width:1222px;height:1px;background:#e0e0e0;"></div>
<svg style="position:absolute;left:192.5px;top:630.6999999999999px;" width="17" height="5" viewBox="0 0 17 5"><circle cx="2.3" cy="2.5" r="1.7" stroke="#1f70b0" stroke-width="1.2" fill="none"/><circle cx="8.3" cy="2.5" r="1.7" stroke="#1f70b0" stroke-width="1.2" fill="none"/><circle cx="14.3" cy="2.5" r="1.7" stroke="#1f70b0" stroke-width="1.2" fill="none"/></svg>
<svg style="position:absolute;left:219px;top:624.8px;" width="16" height="16" viewBox="0 0 16 16"><circle cx="8" cy="8" r="7.3" stroke="#1f70b0" stroke-width="1.2" fill="none"/><path d="M8 4.3 V4.5" stroke="#1f70b0" stroke-width="1.5" stroke-linecap="round"/><path d="M7.1 6.9 H7.9 V10.4 Q8 11.6 9.1 11.7" stroke="#1f70b0" stroke-width="1.2" fill="none" stroke-linecap="round"/></svg>
<div class="t " style="left:255.4px;top:628.02px;font-size:12.5px;line-height:12.5px;font-weight:normal;color:#1c1c1c;">006</div>
<div class="t " style="left:335.3px;top:627.87px;font-size:12.67px;line-height:12.67px;font-weight:normal;color:#1c1c1c;">Dodavatel - školení 6</div>
<div class="t " style="left:490.1px;top:627.76px;font-size:12.8px;line-height:12.8px;font-weight:normal;color:#1c1c1c;">45359326</div>
<div class="t " style="left:590.7px;top:627.87px;font-size:12.67px;line-height:12.67px;font-weight:normal;color:#1c1c1c;">17. 5. 2025 9:42</div>
<div class="t " style="left:740.1px;top:627.87px;font-size:12.67px;line-height:12.67px;font-weight:normal;color:#1c1c1c;">Vzata zpět</div>
<svg style="position:absolute;left:948.2px;top:628.3px;" width="9" height="9" viewBox="0 0 9 9"><path d="M1 1 L8 8 M8 1 L1 8" stroke="#d32f2f" stroke-width="2" stroke-linecap="round"/></svg>
<svg style="position:absolute;left:1107.9px;top:628.3px;" width="9" height="9" viewBox="0 0 9 9"><path d="M1 1 L8 8 M8 1 L1 8" stroke="#d32f2f" stroke-width="2" stroke-linecap="round"/></svg>
<svg style="position:absolute;left:1297.0px;top:628.3px;" width="11" height="9" viewBox="0 0 11 9"><path d="M1 4.6 L4.2 7.6 L10 1.2" stroke="#2db52d" stroke-width="2.1" fill="none" stroke-linecap="round" stroke-linejoin="round"/></svg>
<svg style="position:absolute;left:192.5px;top:655.6999999999999px;" width="17" height="5" viewBox="0 0 17 5"><circle cx="2.3" cy="2.5" r="1.7" stroke="#1f70b0" stroke-width="1.2" fill="none"/><circle cx="8.3" cy="2.5" r="1.7" stroke="#1f70b0" stroke-width="1.2" fill="none"/><circle cx="14.3" cy="2.5" r="1.7" stroke="#1f70b0" stroke-width="1.2" fill="none"/></svg>
<svg style="position:absolute;left:219px;top:649.8px;" width="16" height="16" viewBox="0 0 16 16"><circle cx="8" cy="8" r="7.3" stroke="#1f70b0" stroke-width="1.2" fill="none"/><path d="M8 4.3 V4.5" stroke="#1f70b0" stroke-width="1.5" stroke-linecap="round"/><path d="M7.1 6.9 H7.9 V10.4 Q8 11.6 9.1 11.7" stroke="#1f70b0" stroke-width="1.2" fill="none" stroke-linecap="round"/></svg>
<div class="t " style="left:255.4px;top:653.02px;font-size:12.5px;line-height:12.5px;font-weight:normal;color:#1c1c1c;">007</div>
<div class="t " style="left:335.3px;top:652.87px;font-size:12.67px;line-height:12.67px;font-weight:normal;color:#1c1c1c;">Dodavatel - školení 3</div>
<div class="t " style="left:490.1px;top:652.76px;font-size:12.8px;line-height:12.8px;font-weight:normal;color:#1c1c1c;">12345678</div>
<div class="t " style="left:590.7px;top:652.87px;font-size:12.67px;line-height:12.67px;font-weight:normal;color:#1c1c1c;">17. 5. 2025 9:43</div>
<div class="t " style="left:740.1px;top:652.87px;font-size:12.67px;line-height:12.67px;font-weight:normal;color:#1c1c1c;">Otevření zaevidováno</div>
<svg style="position:absolute;left:948.2px;top:653.3px;" width="9" height="9" viewBox="0 0 9 9"><path d="M1 1 L8 8 M8 1 L1 8" stroke="#d32f2f" stroke-width="2" stroke-linecap="round"/></svg>
<svg style="position:absolute;left:1107.9px;top:653.3px;" width="9" height="9" viewBox="0 0 9 9"><path d="M1 1 L8 8 M8 1 L1 8" stroke="#d32f2f" stroke-width="2" stroke-linecap="round"/></svg>
<svg style="position:absolute;left:1297.0px;top:653.3px;" width="11" height="9" viewBox="0 0 11 9"><path d="M1 4.6 L4.2 7.6 L10 1.2" stroke="#2db52d" stroke-width="2.1" fill="none" stroke-linecap="round" stroke-linejoin="round"/></svg>
<div style="position:absolute;left:189px;top:596.5px;width:258px;height:227px;background:#fff;border:1px solid #cfcfcf;border-radius:9px;box-sizing:border-box;box-shadow:1px -2px 14px rgba(0,0,0,0.17);"></div>
<div class="t " style="left:206.2px;top:615.03px;font-size:12.6px;line-height:12.6px;font-weight:normal;color:#a8a8a8;">Dešifrovat</div>
<div class="t med" style="left:206.2px;top:646.89px;font-size:12.53px;line-height:12.53px;font-weight:normal;color:#111;">Sloučení nabídek</div>
<div style="position:absolute;left:189px;top:665px;width:257px;height:38.6px;border:1.6px solid #e21b23;box-sizing:border-box;"></div>
<div class="t med" style="left:206.2px;top:678.91px;font-size:12.51px;line-height:12.51px;font-weight:normal;color:#111;">Označení nabídky jako nepodaná</div>
<div class="t med" style="left:206.2px;top:711.69px;font-size:12.53px;line-height:12.53px;font-weight:normal;color:#111;">Detail nabídky</div>
<div class="t med" style="left:206.2px;top:743.69px;font-size:12.53px;line-height:12.53px;font-weight:normal;color:#111;">Vyloučení dodavatele</div>
<div style="position:absolute;left:190px;top:773.7px;width:255px;height:1px;background:#dcdcdc;"></div>
<div class="t med" style="left:206.2px;top:793.49px;font-size:12.53px;line-height:12.53px;font-weight:normal;color:#111;">Otevřít samostatně</div>
<div style="position:absolute;left:537px;top:43px;width:524px;height:51px;background:rgba(0,0,0,0.022);"></div>
<div class="t " style="left:577.4px;top:61.69px;font-size:14.9px;line-height:14.9px;font-weight:normal;color:rgba(255,255,255,0.85);">Pokud chcete ukončit režim celé obrazovky, podržte</div>
<div style="position:absolute;left:928.7px;top:52.4px;width:84.3px;height:32.6px;border:1px solid rgba(255,255,255,0.5);border-radius:3px;box-sizing:border-box;"></div>
<div class="t " style="left:935px;top:62.79px;font-size:13.6px;line-height:13.6px;font-weight:normal;color:rgba(255,255,255,0.85);">Klávesa Esc</div>
</body></html>
